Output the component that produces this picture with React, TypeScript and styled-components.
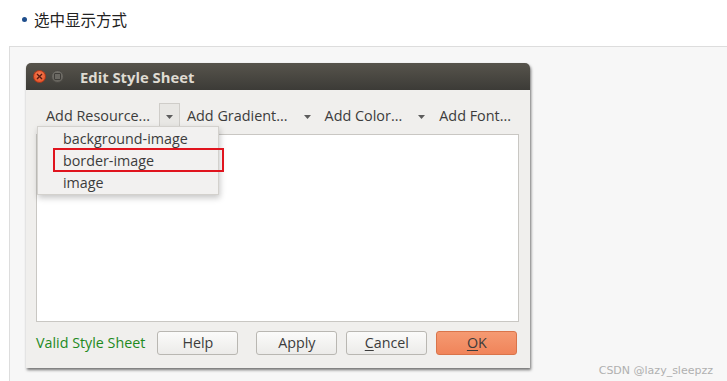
import React from "react";
import styled, { createGlobalStyle } from "styled-components";

const ui = `"Open Sans", "DejaVu Sans", sans-serif`;

const GlobalStyle = createGlobalStyle`
  html, body {
    margin: 0;
    padding: 0;
    background: #ffffff;
  }
`;

const toolItems = ["Add Resource...", "Add Gradient...", "Add Color...", "Add Font..."];
const menuItems = ["background-image", "border-image", "image"];

const App: React.FC = () => {
  return (
    <Page>
      <GlobalStyle />
      <Heading>
        <Bullet />
        <HeadingText>选中显示方式</HeadingText>
      </Heading>
      <Panel>
        <Dialog>
          <TitleBar>
            <WinButton kind="close">
              <svg width="7" height="7" viewBox="0 0 7 7">
                <path d="M1 1L6 6M6 1L1 6" stroke="#5a1a10" strokeWidth="1.4" />
              </svg>
            </WinButton>
            <WinButton kind="min" />
            <Title>Edit Style Sheet</Title>
          </TitleBar>
          <Body>
            <Toolbar>
              {toolItems.map((label, i) => (
                <React.Fragment key={label}>
                  <ToolLabel>{label}</ToolLabel>
                  {i < toolItems.length - 1 && (
                    <ArrowButton pressed={i === 0}>
                      <svg width="7" height="4" viewBox="0 0 7 4">
                        <path d="M0 0H7L3.5 4Z" fill="#5c5c5c" />
                      </svg>
                    </ArrowButton>
                  )}
                </React.Fragment>
              ))}
            </Toolbar>
            <Editor />
            <Menu>
              {menuItems.map((item) => (
                <MenuItem key={item} marked={item === "border-image"}>
                  {item}
                </MenuItem>
              ))}
            </Menu>
            <Footer>
              <Status>Valid Style Sheet</Status>
              <Button>Help</Button>
              <Button spaced>Apply</Button>
              <Button>
                <u>C</u>ancel
              </Button>
              <Button primary>
                <u>O</u>K
              </Button>
            </Footer>
          </Body>
        </Dialog>
        <Watermark>CSDN @lazy_sleepzz</Watermark>
      </Panel>
    </Page>
  );
};

export default App;

const Page = styled.div`
  width: 727px;
  height: 381px;
  overflow: hidden;
  display: flex;
  flex-direction: column;
`;

const Heading = styled.div`
  height: 46px;
  display: flex;
  align-items: flex-start;
  padding: 8px 0 0 22px;
  box-sizing: border-box;
`;

const Bullet = styled.span`
  width: 5px;
  height: 5px;
  border-radius: 50%;
  background: #1f4e8c;
  margin: 9px 7px 0 0;
`;

const HeadingText = styled.span`
  font-family: "Noto Sans CJK SC", sans-serif;
  font-size: 15.5px;
  line-height: 22px;
  color: #222;
`;

const Panel = styled.div`
  position: relative;
  flex: 1;
  margin-left: 9px;
  border-top: 1px solid #dddddd;
  border-left: 1px solid #dddddd;
  background: #f7f7f7;
  padding: 16px 0 0 16px;
`;

const Dialog = styled.div`
  width: 504px;
  height: 305px;
  display: flex;
  flex-direction: column;
  border-radius: 5px 5px 0 0;
  box-shadow: 1px 2px 3px rgba(0, 0, 0, 0.55);
  background: #f0efed;
  overflow: hidden;
`;

const TitleBar = styled.div`
  height: 27px;
  display: flex;
  align-items: center;
  padding-left: 7px;
  background: linear-gradient(#57544c, #3c3b37);
`;

const WinButton = styled.span<{ kind: "close" | "min" }>`
  width: 13px;
  height: 13px;
  border-radius: 50%;
  margin-right: 5px;
  display: flex;
  align-items: center;
  justify-content: center;
  box-sizing: border-box;
  background: ${({ kind }) =>
    kind === "close"
      ? "radial-gradient(circle at 50% 40%, #f7845a, #e1461c)"
      : "radial-gradient(circle at 50% 40%, #7d7a73, #5b5953)"};
  border: 1px solid ${({ kind }) => (kind === "close" ? "#b4391a" : "#4c4a45")};
  &::after {
    content: "";
    display: ${({ kind }) => (kind === "min" ? "block" : "none")};
    width: 5px;
    height: 5px;
    border: 1px solid #3f3d39;
    border-radius: 1px;
    background: #6a6862;
  }
`;

const Title = styled.span`
  margin-left: 11px;
  font-family: ${ui};
  font-weight: 700;
  font-size: 14.8px;
  color: #dfdbd2;
`;

const Body = styled.div`
  position: relative;
  flex: 1;
  display: flex;
  flex-direction: column;
  padding: 13px 11px 0 10px;
`;

const Toolbar = styled.div`
  height: 24px;
  display: flex;
  align-items: center;
  padding-left: 10px;
`;

const ToolLabel = styled.span`
  font-family: ${ui};
  font-size: 14.4px;
  color: #3c3c3c;
  white-space: nowrap;
`;

const ArrowButton = styled.span<{ pressed?: boolean }>`
  width: 21px;
  height: 25px;
  margin: 1px 7px 0 9px;
  display: flex;
  align-items: center;
  justify-content: center;
  box-sizing: border-box;
  border: 1px solid ${({ pressed }) => (pressed ? "#cfcdc9" : "transparent")};
  border-bottom: none;
  background: ${({ pressed }) => (pressed ? "#e8e7e4" : "transparent")};
  padding-top: 2px;
`;

const Editor = styled.div`
  height: 188px;
  margin-top: 7px;
  background: #ffffff;
  border: 1px solid #c9c7c3;
  box-sizing: border-box;
`;

const Menu = styled.div`
  position: absolute;
  left: 11px;
  top: 36px;
  width: 182px;
  padding: 1px 0 0;
  background: #f2f1f0;
  border: 1px solid #d3d1cd;
  box-sizing: border-box;
  box-shadow: 1px 3px 6px rgba(0, 0, 0, 0.22);
`;

const MenuItem = styled.div<{ marked?: boolean }>`
  position: relative;
  height: 22px;
  line-height: 22px;
  padding-left: 25px;
  font-family: ${ui};
  font-size: 14.3px;
  color: #3c3c3c;
  &::after {
    content: "";
    display: ${({ marked }) => (marked ? "block" : "none")};
    position: absolute;
    left: 15px;
    top: -2px;
    width: 171px;
    height: 24px;
    border: 2px solid #e0141e;
    box-sizing: border-box;
  }
`;

const Footer = styled.div`
  height: 44px;
  display: flex;
  align-items: center;
  gap: 9px;
  padding-bottom: 3px;
  box-sizing: border-box;
`;

const Status = styled.span`
  font-family: ${ui};
  font-size: 14.3px;
  color: #1e8a1e;
  white-space: nowrap;
  margin-right: 3px;
`;

const Button = styled.span<{ primary?: boolean; spaced?: boolean }>`
  width: 81px;
  height: 24px;
  margin-left: ${({ spaced }) => (spaced ? "9px" : "0")};
  display: flex;
  align-items: center;
  justify-content: center;
  box-sizing: border-box;
  border-radius: 3px;
  font-family: ${ui};
  font-size: 14.3px;
  color: #3c3c3c;
  border: 1px solid ${({ primary }) => (primary ? "#d9744a" : "#b9b7b2")};
  background: ${({ primary }) =>
    primary ? "linear-gradient(#f59a72, #f0845a)" : "linear-gradient(#fbfbfa, #ecebe9)"};
  u {
    text-decoration-thickness: 1px;
    text-underline-offset: 2px;
  }
`;

const Watermark = styled.span`
  position: absolute;
  right: 14px;
  bottom: 4px;
  font-family: "DejaVu Sans", sans-serif;
  font-size: 11px;
  color: #b0b0b0;
`;
